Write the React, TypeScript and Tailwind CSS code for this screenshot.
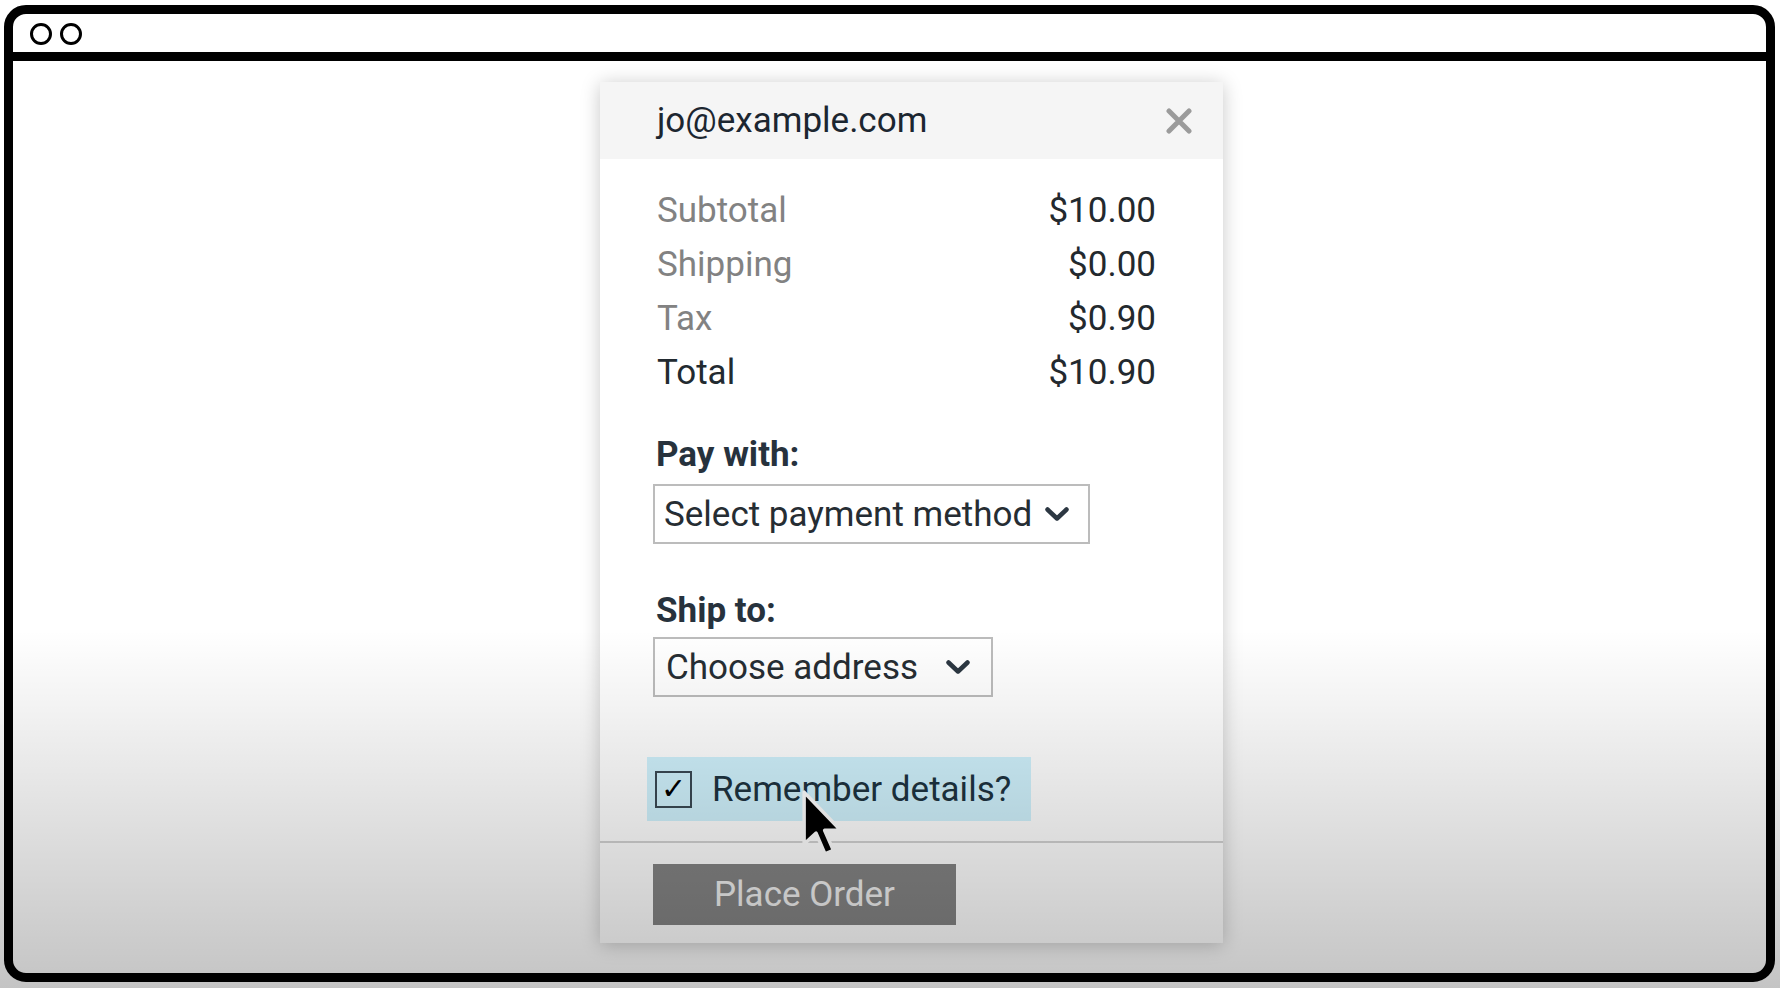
import React from "react";

const font = { fontFamily: "Roboto, 'Noto Sans', sans-serif" };

function Chevron() {
  return (
    <svg width="24" height="15" viewBox="0 0 24 15" fill="none">
      <path d="M2.5 2.5 L12 11.5 L21.5 2.5" stroke="#2c3742" strokeWidth="4.5" strokeLinecap="round" strokeLinejoin="round" />
    </svg>
  );
}

function CloseIcon() {
  return (
    <svg width="26" height="26" viewBox="0 0 26 26" fill="none">
      <path d="M3 3 L23 23 M23 3 L3 23" stroke="#9b9b9b" strokeWidth="5" strokeLinecap="round" />
    </svg>
  );
}

function Cursor() {
  return (
    <svg width="44" height="68" viewBox="0 0 14 21.6" fill="none">
      <path d="M1 1 L1 17.5 L4.8 14 L7.6 20.6 L10.3 19.5 L7.5 13.1 L12.6 13.1 Z" fill="#000" stroke="#fff" strokeWidth="1.1" strokeLinejoin="round" />
    </svg>
  );
}

const rows = [
  { label: "Subtotal", value: "$10.00", strong: false },
  { label: "Shipping", value: "$0.00", strong: false },
  { label: "Tax", value: "$0.90", strong: false },
  { label: "Total", value: "$10.90", strong: true },
];

export default function App() {
  return (
    <div className="relative w-[1780px] h-[988px] overflow-hidden bg-white" style={font}>
      {/* browser frame */}
      <div className="ml-[4px] mt-[5px] w-[1771px] h-[977px] border-[9px] border-black rounded-[22px] flex flex-col overflow-hidden">
        <div className="h-[38px] flex items-center gap-[8px] pl-[17px] pt-[2px] shrink-0">
          <div className="w-[22px] h-[22px] rounded-full border-[3px] border-black" />
          <div className="w-[22px] h-[22px] rounded-full border-[3px] border-black" />
        </div>
        <div className="h-[9px] bg-black shrink-0" />

        <div className="flex-1 pt-[21px] pl-[587px]">
          {/* checkout card */}
          <div className="w-[623px] bg-white shadow-[0_2px_18px_rgba(0,0,0,0.22)] flex flex-col">
            <div className="h-[77px] bg-[#f5f5f5] flex items-center justify-between pl-[57px] pr-[31px]">
              <span className="text-[35px] text-[#1c2630] leading-none">jo@example.com</span>
              <CloseIcon />
            </div>

            <div className="pt-[24px]">
              {rows.map((r) => (
                <div key={r.label} className="h-[54px] flex items-center justify-between pl-[57px] pr-[67px] text-[35px] leading-none">
                  <span className={r.strong ? "text-[#222a30]" : "text-[#828282]"}>{r.label}</span>
                  <span className="text-[#23292e]">{r.value}</span>
                </div>
              ))}
            </div>

            <div className="pl-[53px] flex flex-col items-start">
              <div className="mt-[36px] ml-[3px] h-[40px] flex items-center text-[35px] font-bold text-[#27323d]">Pay with:</div>
              <div className="mt-[9px] h-[60px] w-[437px] border-2 border-[#bcbcbc] flex items-center justify-between pl-[9px] pr-[19px]">
                <span className="text-[35px] text-[#262d33] leading-none">Select payment method</span>
                <Chevron />
              </div>

              <div className="mt-[47px] ml-[3px] h-[40px] flex items-center text-[35px] font-bold text-[#27323d]">Ship to:</div>
              <div className="mt-[6px] h-[60px] w-[340px] border-2 border-[#bcbcbc] flex items-center justify-between pl-[11px] pr-[21px]">
                <span className="text-[35px] text-[#262d33] leading-none">Choose address</span>
                <Chevron />
              </div>

              <div className="mt-[60px] -ml-[6px] w-[384px] h-[64px] bg-[#d0f2fd] flex items-center pl-[8px]">
                <div className="w-[37px] h-[37px] border-2 border-[#3a4954] flex items-center justify-center text-[30px] font-bold text-black leading-none" style={{ fontFamily: "'DejaVu Sans', sans-serif" }}>
                  ✓
                </div>
                <span className="ml-[20px] text-[35px] text-[#1d3340] leading-none">Remember details?</span>
              </div>
            </div>

            <div className="mt-[20px] h-[2px] bg-[#d3d3d3]" />

            <div className="pt-[21px] pb-[18px] pl-[53px]">
              <div className="w-[303px] h-[61px] bg-[#848484] flex items-center justify-center text-[35px] text-[#f0f0f0] leading-none">
                Place Order
              </div>
            </div>
          </div>
        </div>
      </div>

      {/* mouse pointer */}
      <div className="absolute left-[801px] top-[789px]">
        <Cursor />
      </div>

      {/* video vignette toward the bottom */}
      <div className="absolute left-0 right-0 top-[630px] bottom-0 pointer-events-none bg-linear-to-b from-transparent to-[rgba(0,0,0,0.23)]" />
    </div>
  );
}
